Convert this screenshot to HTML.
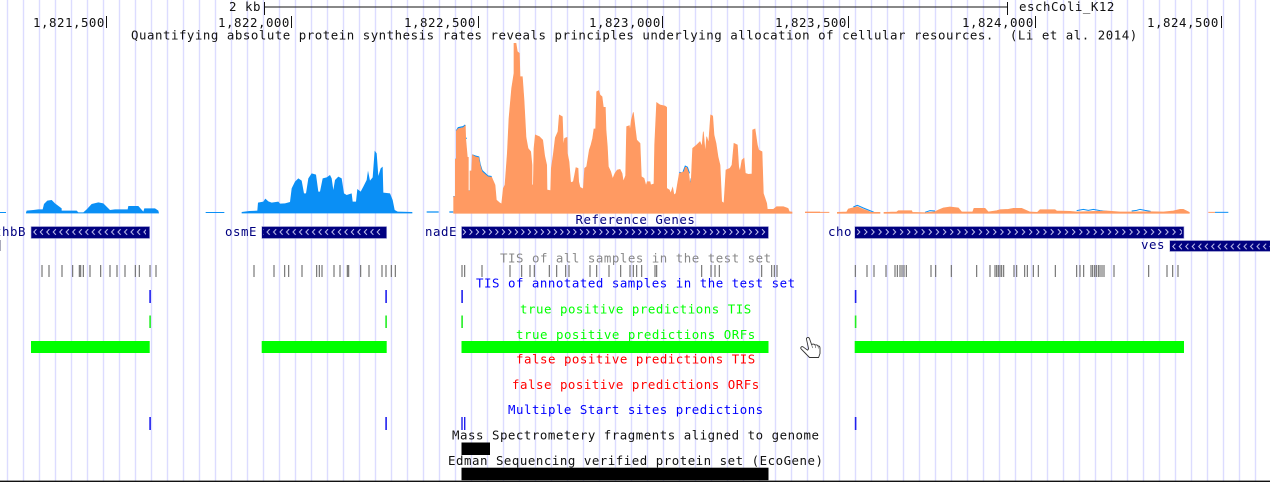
<!DOCTYPE html>
<html><head><meta charset="utf-8"><style>
html,body{margin:0;padding:0;background:#fff;width:1270px;height:482px;overflow:hidden}
svg{display:block;filter:blur(.3px)}
text{font-family:"DejaVu Sans Mono","Liberation Mono",monospace;font-size:12.4px;letter-spacing:.53px;white-space:pre}
</style></head><body>
<svg width="1270" height="482" viewBox="0 0 1270 482" xmlns="http://www.w3.org/2000/svg">
<defs>
<pattern id="grid" width="16" height="482" patternUnits="userSpaceOnUse"><rect x="6.8" width="1.4" height="482" fill="#dcdcff"/></pattern>
<pattern id="cl" x="32" width="6.48" height="12" y="226" patternUnits="userSpaceOnUse"><path d="M4.4 3.2 1.8 6l2.6 2.8" fill="none" stroke="#c8c8ef" stroke-width="1"/></pattern>
<pattern id="cr" x="461" width="6.5" height="12" y="226" patternUnits="userSpaceOnUse"><path d="M2 3.2 4.6 6 2 8.8" fill="none" stroke="#c8c8ef" stroke-width="1"/></pattern>
<pattern id="cr2" x="855" width="7.17" height="12" y="226" patternUnits="userSpaceOnUse"><path d="M2.2 3.2 4.8 6 2.2 8.8" fill="none" stroke="#c8c8ef" stroke-width="1"/></pattern>
<pattern id="cl2" x="1171" width="6.48" height="11" y="241" patternUnits="userSpaceOnUse"><path d="M4.4 2.7 1.8 5.5l2.6 2.8" fill="none" stroke="#c8c8ef" stroke-width="1"/></pattern>
</defs>
<rect width="1270" height="482" fill="#fff"/>
<rect width="1270" height="482" fill="url(#grid)"/>

<!-- scale -->
<text x="229" y="11" fill="#111">2 kb</text>
<path d="M264.5 2v13M264.5 7H1007.5M1007.5 2v13" stroke="#111" fill="none" stroke-width="1"/>
<text x="1019" y="11" fill="#111">eschColi_K12</text>
<text x="33" y="27" fill="#111">1,821,500</text>
<text x="218" y="27" fill="#111">1,822,000</text>
<text x="404" y="27" fill="#111">1,822,500</text>
<text x="589" y="27" fill="#111">1,823,000</text>
<text x="775" y="27" fill="#111">1,823,500</text>
<text x="962" y="27" fill="#111">1,824,000</text>
<text x="1147" y="27" fill="#111">1,824,500</text>
<path d="M106.5 16v12M291.5 16v12M478.5 16v12M662.5 16v12M848.5 16v12M1035.5 16v12M1221.5 16v12" stroke="#111"/>
<text x="131" y="39.5" fill="#111">Quantifying absolute protein synthesis rates reveals principles underlying allocation of cellular resources.  (Li et al. 2014)</text>

<!-- coverage: blue left -->
<g transform="translate(0,170) scale(.33333)" fill="#0a8ff5">
<path d="M78 128 80 122 100 120 115 118 128 118 132 102 142 92 155 90 165 100 185 115 185 122 230 122 235 127 250 127 260 118 275 102 295 97 310 100 330 120 345 118 383 118 385 108 415 108 430 125 433 115 465 115 475 122 477 130 78 130Z"/>
<rect x="0" y="126" width="18" height="3"/><rect x="617" y="126" width="56" height="3"/>
</g>
<g transform="translate(230,140) scale(.33333)" fill="#0a8ff5">
<path d="M35 220 35 216 58 213 82 212 84 188 100 185 106 176 115 184 125 188 145 185 150 191 165 190 180 186 185 145 195 125 205 115 215 122 222 160 228 160 235 115 245 100 258 104 265 155 270 155 278 115 290 112 300 105 305 115 310 150 315 120 325 110 335 115 342 160 350 165 365 160 368 185 378 185 382 147 392 155 400 140 410 120 414 92 420 122 428 112 434 32 440 40 445 108 452 85 458 80 460 158 480 160 488 180 494 210 503 215 547 216 547 220Z"/>
</g>

<!-- coverage: orange centre -->
<g transform="translate(420,30) scale(.33333)">
<path d="M20 546H56M88 546H100" stroke="#0a8ff5" stroke-width="4" fill="none"/>
<path d="M109 303 115 293 130 290 136 285M139 325H141M106 388H108M100 500H104M145 483H150M157 375 165 378 176 381 180 403 186 422 195 430 203 438 215 440M778 427 788 430 796 409 802 412 808 430M810 467 814 445" stroke="#0a8ff5" stroke-width="4" fill="none"/>
<path fill="#ff9a62" stroke="#ff9a62" stroke-width="2" d="M101 550 101 500 106 500 106 388 109 388 109 303 115 296 130 293 136 287 137 325 142 382 145 382 145 483 150 483 150 423 155 423 157 375 165 380 176 383 180 405 186 425 195 433 203 440 215 442 225 465 229 510 238 518 245 522 250 475 255 465 262 370 267 265 275 175 282 130 282 40 288 40 292 65 298 70 300 140 307 140 312 210 318 322 324 355 332 365 336 405 336 465 340 465 342 355 346 315 358 320 368 330 374 378 380 405 381 480 392 482 394 415 400 373 406 323 414 305 418 255 427 260 430 350 434 325 441 322 442 370 447 395 452 458 460 455 464 435 468 413 474 415 476 455 480 472 490 477 494 415 500 410 508 360 513 345 518 325 522 297 527 297 530 185 536 182 540 195 546 200 550 232 556 232 558 300 562 350 565 410 572 425 578 447 585 430 592 420 600 418 606 430 610 455 617 437 620 290 628 287 630 305 634 270 640 247 645 290 650 330 660 340 664 440 672 445 678 468 682 455 690 455 692 465 702 462 704 345 708 260 710 218 720 225 735 228 740 232 740 475 748 480 752 490 758 473 762 495 768 490 772 465 778 430 792 425 796 412 800 412 806 428 810 465 814 445 818 355 830 345 840 335 846 350 850 305 856 370 860 320 866 340 872 255 878 258 882 315 888 340 894 380 900 405 905 515 912 520 918 420 930 415 936 405 942 340 952 345 956 410 960 425 966 390 972 385 976 430 985 433 996 432 998 300 1005 297 1012 345 1016 360 1026 365 1030 490 1040 520 1042 538 1060 538 1070 530 1090 530 1104 535 1108 545 1116 546 1116 550Z"/>
<path d="M1155 547H1200" stroke="#ff9a62" stroke-width="4"/>
</g>

<!-- coverage: right -->
<g transform="translate(800,190) scale(.33333)">
<path d="M160 51 172 46 190 54 205 60 222 67M375 67 390 62 405 63M830 62 850 58 865 61 880 58 900 62 920 64M995 63 1010 61 1020 58 1035 61 1052 64" stroke="#0a8ff5" stroke-width="3" fill="none"/>
<path fill="#ff9a62" stroke="#ff9a62" stroke-width="2" d="M112 70 112 67 140 66 145 57 160 53 172 50 190 58 205 63 212 67 240 67 240 70ZM252 70 252 67 290 66 295 62 335 62 337 67 375 68 405 65 415 60 430 54 450 51 475 54 485 66 518 66 522 55 555 55 565 66 590 62 600 59 625 58 640 55 665 55 690 66 712 67 720 59 765 59 770 63 810 64 830 66 890 64 920 63 960 66 995 66 1050 65 1090 66 1120 63 1140 58 1150 58 1168 67 1168 70Z"/>
<path d="M18 67H88M1225 67H1245" stroke="#ff9a62" stroke-width="3"/>
<path d="M1245 67H1285" stroke="#0a8ff5" stroke-width="3"/>
</g>

<!-- Gene track -->
<text x="575.5" y="224" fill="#000080">Reference Genes</text>
<g fill="#000080" stroke="#b9b9e0" stroke-width=".6">
<rect x="31" y="226.5" width="118.7" height="12"/>
<rect x="261.7" y="226.5" width="125" height="12"/>
<rect x="461.5" y="226.5" width="307" height="12"/>
<rect x="854.7" y="226.5" width="329.3" height="12"/>
<rect x="1169.7" y="240.5" width="101" height="11"/>
</g>
<rect x="32" y="227" width="114" height="11" fill="url(#cl)"/>
<rect x="263" y="227" width="120" height="11" fill="url(#cl)"/>
<rect x="462" y="227" width="304" height="11" fill="url(#cr)"/>
<rect x="855" y="227" width="327" height="11" fill="url(#cr2)"/>
<rect x="1171" y="241" width="99" height="10" fill="url(#cl2)"/>
<text x="-6" y="236" fill="#000080">thbB</text>
<text x="225" y="236" fill="#000080">osmE</text>
<text x="425" y="236" fill="#000080">nadE</text>
<text x="828" y="236" fill="#000080">cho</text>
<text x="1141" y="249" fill="#000080">ves</text>
<rect x="0" y="240" width="1" height="11" fill="#aab"/>

<!-- TIS all -->
<text x="500" y="262.3" fill="#888">TIS of all samples in the test set</text>
<path transform="scale(.33333,1)" stroke="#707070" stroke-width="3.4" fill="none" d="M126 265v12M147 265v12M186 265v12M218 265v12M238 265v12M242 265v12M250 265v12M270 265v12M302 265v12M330 265v12M351 265v12M375 265v12M406 265v12M418 265v12M450 265v12M468 265v12M762 265v12M822 265v12M854 265v12M866 265v12M906 265v12M950 265v12M958 265v12M966 265v12M1002 265v12M1020 265v12M1042 265v12M1046 265v12M1082 265v12M1107 265v12M1146 265v12M1158 265v12M1174 265v12M1186 265v12"/>
<path transform="translate(420,0) scale(.33333,1)" stroke="#707070" stroke-width="3.4" fill="none" d="M126 265v12M134 265v12M186 265v12M270 265v12M305 265v12M330 265v12M343 265v12M388 265v12M410 265v12M437 265v12M447 265v12M510 265v12M530 265v12M567 265v12M602 265v12M630 265v12M640 265v12M650 265v12M665 265v12M705 265v12M710 265v12M845 265v12M873 265v12M885 265v12M898 265v12M1025 265v12M1055 265v12M1063 265v12M1071 265v12"/>
<path transform="translate(800,0) scale(.33333,1)" stroke="#707070" stroke-width="3.4" fill="none" d="M166 265v12M201 265v12M222 265v12M258 265v12M285 265v12M292 265v12M300 265v12M306 265v12M312 265v12M319 265v12M393 265v12M407 265v12M454 265v12M530 265v12M570 265v12M585 265v12M590 265v12M595 265v12M600 265v12M605 265v12M611 265v12M642 265v12M650 265v12M674 265v12M682 265v12M700 265v12M715 265v12M766 265v12M830 265v12M840 265v12M851 265v12M873 265v12M878 265v12M884 265v12M889 265v12M895 265v12M900 265v12M906 265v12M912 265v12M942 265v12M1046 265v12M1101 265v12M1118 265v12M1134 265v12"/>

<!-- TIS annotated -->
<text x="476" y="287.7" fill="#0000ff">TIS of annotated samples in the test set</text>
<g fill="#2020ee"><rect x="149.3" y="290" width="1.6" height="13"/><rect x="385.3" y="290" width="1.6" height="13"/><rect x="461.3" y="290" width="1.6" height="13"/><rect x="854.8" y="290" width="1.6" height="13"/></g>

<!-- TP TIS -->
<text x="520" y="313.4" fill="#00ff00">true positive predictions TIS</text>
<g fill="#22ee22"><rect x="149.3" y="315.5" width="1.6" height="12.5"/><rect x="385.3" y="315.5" width="1.6" height="12.5"/><rect x="461.3" y="315.5" width="1.6" height="12.5"/><rect x="854.8" y="315.5" width="1.6" height="12.5"/></g>

<!-- TP ORF -->
<text x="516" y="339" fill="#00ff00">true positive predictions ORFs</text>
<g fill="#00ff00"><rect x="31" y="341" width="118.7" height="12"/><rect x="261.7" y="341" width="125" height="12"/><rect x="461.5" y="341" width="307" height="12"/><rect x="854.7" y="341" width="329.3" height="12"/></g>

<text x="516" y="363.6" fill="#ff0000">false positive predictions TIS</text>
<text x="512" y="389" fill="#ff0000">false positive predictions ORFs</text>
<text x="508" y="414.2" fill="#0000ff">Multiple Start sites predictions</text>
<g fill="#2020ee"><rect x="149.3" y="417" width="1.6" height="13"/><rect x="385.3" y="417" width="1.6" height="13"/><rect x="461.3" y="417" width="1.4" height="13"/><rect x="464" y="417" width="1.4" height="13"/><rect x="854.8" y="417" width="1.6" height="13"/></g>

<text x="452" y="439.5" fill="#111">Mass Spectrometery fragments aligned to genome</text>
<rect x="461.5" y="442.5" width="28.5" height="12.5" fill="#000"/>
<text x="448" y="465" fill="#111">Edman Sequencing verified protein set (EcoGene)</text>
<rect x="461.5" y="467.7" width="307" height="12.5" fill="#000"/>
<rect x="0" y="480.6" width="1270" height="1.4" fill="#111"/>

<!-- cursor -->
<g transform="translate(800,337)">
<path d="M6.5 2.2C6.2.6 8.6-.2 9.4 1.4L11.6 7.6C13 6.8 14.4 7 15 8 16.3 7.6 17.5 8 18 9 19 8.8 20 9.5 20 11L20 16.5 18.6 20.5 9.5 20.5 5.6 16.5 1 11.8C.2 10.6 1.6 9 3 9.8L7.6 13.2 8.6 11.8Z" fill="#fff" stroke="#333" stroke-width=".9" stroke-linejoin="round"/>
<path d="M11.6 7.6 12.6 11M15 8 15.8 11M18 9 18.4 11.5" stroke="#555" stroke-width=".6" fill="none"/>
</g>
</svg>
</body></html>
